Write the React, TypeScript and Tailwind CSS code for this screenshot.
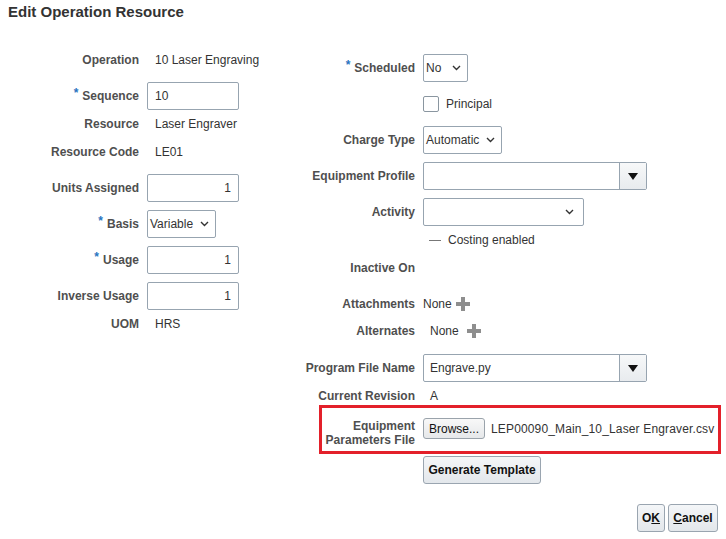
import React from "react";

const font = { fontFamily: '"Liberation Sans", Arial, sans-serif' };

function Req() {
  return <span className="mr-[4px] relative -top-[3px] text-[12px] font-bold text-[#2a74c0]">*</span>;
}

function Label({ children, req }: { children: React.ReactNode; req?: boolean }) {
  return (
    <div className="flex items-center justify-end text-[12px] font-bold text-[#4f4f4f] whitespace-nowrap">
      {req && <Req />}
      {children}
    </div>
  );
}

function Value({ children, className = "" }: { children: React.ReactNode; className?: string }) {
  return <div className={"text-[12px] text-[#333] whitespace-nowrap " + className}>{children}</div>;
}

function Chevron() {
  return (
    <svg width="9" height="6" viewBox="0 0 9 6" className="shrink-0">
      <path d="M1 1 L4.5 4.5 L8 1" fill="none" stroke="#333" strokeWidth="1.4" />
    </svg>
  );
}

function TextBox({ value, right, w = "w-[92px]" }: { value: string; right?: boolean; w?: string }) {
  return (
    <div
      className={
        w +
        " h-[28px] rounded-[2px] border border-[#97a4b0] bg-white flex items-center text-[12px] text-[#333] " +
        (right ? "justify-end pr-[7px]" : "pl-[7px]")
      }
    >
      {value}
    </div>
  );
}

function Select({ value, w }: { value: string; w: string }) {
  return (
    <div
      className={
        w +
        " h-[28px] rounded-[2px] border border-[#97a4b0] bg-white flex items-center justify-between pl-[2px] pr-[6px] text-[12px] text-[#333]"
      }
    >
      <span>{value}</span>
      <Chevron />
    </div>
  );
}

function Combo({ value }: { value: string }) {
  return (
    <div className="w-[224px] h-[28px] rounded-[2px] border border-[#97a4b0] bg-white flex text-[12px] text-[#333]">
      <div className="flex-1 flex items-center pl-[6px]">{value}</div>
      <div className="w-[27px] border-l border-[#97a4b0] bg-gradient-to-b from-[#f7f8f9] to-[#e8ebee] flex items-center justify-center">
        <svg width="10" height="7" viewBox="0 0 10 7">
          <path d="M0 0 H10 L5 7 Z" fill="#111" />
        </svg>
      </div>
    </div>
  );
}

function Plus() {
  return (
    <svg width="14" height="14" viewBox="0 0 14 14" className="shrink-0">
      <path d="M5 0 H9 V5 H14 V9 H9 V14 H5 V9 H0 V5 H5 Z" fill="#8e8e8e" />
    </svg>
  );
}

const btn =
  "h-[28px] rounded-[3px] border border-[#9aa5b0] bg-gradient-to-b from-[#f4f6f8] to-[#e3e7eb] flex items-center justify-center text-[12px] font-bold text-[#111]";

export default function App() {
  return (
    <div style={font} className="relative w-[726px] h-[539px] bg-white overflow-hidden">
      <div className="pl-[8px] pt-[3px] h-[21px] text-[15px] leading-[18px] font-bold text-[#333]">
        Edit Operation Resource
      </div>

      <div className="flex">
        {/* left column */}
        <div className="w-[300px] pt-[21px] grid grid-cols-[139px_1fr] gap-x-[8px] grid-rows-[36px_36px_20px_36px_36px_36px_36px_36px_20px] items-center">
          <Label>Operation</Label>
          <Value className="pl-[8px]">10 Laser Engraving</Value>
          <Label req>Sequence</Label>
          <TextBox value="10" />
          <Label>Resource</Label>
          <Value className="pl-[8px]">Laser Engraver</Value>
          <Label>Resource Code</Label>
          <Value className="pl-[8px]">LE01</Value>
          <Label>Units Assigned</Label>
          <TextBox value="1" right />
          <Label req>Basis</Label>
          <Select value="Variable" w="w-[69px]" />
          <Label req>Usage</Label>
          <TextBox value="1" right />
          <Label>Inverse Usage</Label>
          <TextBox value="1" right />
          <Label>UOM</Label>
          <Value className="pl-[8px]">HRS</Value>
        </div>

        {/* right column */}
        <div className="flex-1 pt-[29px] grid grid-cols-[115px_1fr] gap-x-[8px] grid-rows-[36px_36px_36px_36px_36px_20px_36px_36px_18px_10px_36px_20px_46px_36px] items-center">
          <Label req>Scheduled</Label>
          <Select value="No" w="w-[45px]" />

          <div />
          <div className="flex items-center gap-[7px]">
            <div className="w-[16px] h-[16px] rounded-[2px] border border-[#8a96a0] bg-white" />
            <Value>Principal</Value>
          </div>

          <Label>Charge Type</Label>
          <Select value="Automatic" w="w-[79px]" />

          <Label>Equipment Profile</Label>
          <Combo value="" />

          <Label>Activity</Label>
          <div className="w-[161px] h-[28px] rounded-[2px] border border-[#97a4b0] bg-white flex items-center justify-end pr-[9px]">
            <Chevron />
          </div>

          <div />
          <div className="flex items-center gap-[7px] pl-[6px]">
            <div className="w-[12px] h-px bg-[#777]" />
            <Value>Costing enabled</Value>
          </div>

          <Label>Inactive On</Label>
          <div />

          <Label>Attachments</Label>
          <div className="flex items-center gap-[4px]">
            <Value>None</Value>
            <Plus />
          </div>

          <Label>Alternates</Label>
          <div className="flex items-center gap-[8px] pl-[7px]">
            <Value>None</Value>
            <Plus />
          </div>

          <div />
          <div />

          <Label>Program File Name</Label>
          <Combo value="Engrave.py" />

          <Label>Current Revision</Label>
          <Value className="pl-[7px]">A</Value>

          <div className="self-start pt-[13px] text-right text-[12px] leading-[14px] font-bold text-[#4f4f4f]">
            Equipment
            <br />
            Parameters File
          </div>
          <div className="self-start pt-[12px] flex items-center gap-[6px]">
            <div className="w-[62px] h-[21px] rounded-[3px] border border-[#9aa3ab] bg-gradient-to-b from-[#f8f8f8] to-[#e6e8ea] flex items-center justify-center text-[12px] text-[#111]">
              Browse...
            </div>
            <Value className="text-[#222] tracking-[0.15px]">LEP00090_Main_10_Laser Engraver.csv</Value>
          </div>

          <div />
          <div className={btn + " w-[118px]"}>Generate Template</div>
        </div>
      </div>

      <div className="flex justify-end gap-[3px] pr-[8px] mt-[16px]">
        <div className={btn + " w-[28px]"}>
          O<span className="underline">K</span>
        </div>
        <div className={btn + " w-[50px]"}>
          <span className="underline">C</span>ancel
        </div>
      </div>

      {/* annotation highlight */}
      <div className="absolute left-[319px] top-[405px] w-[402px] h-[49px] border-[3px] border-[#e3202a] pointer-events-none" />
    </div>
  );
}
